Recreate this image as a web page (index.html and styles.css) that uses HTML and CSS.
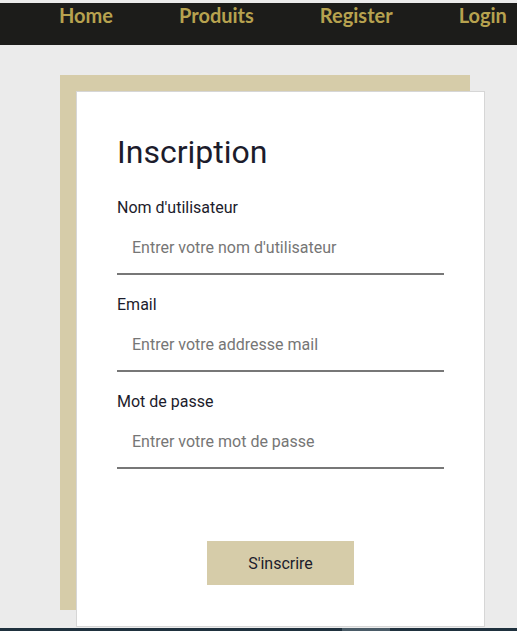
FILE: index.html
```html
<!DOCTYPE html>
<html lang="fr">
<head>
<meta charset="utf-8">
<title>Inscription</title>
<link rel="stylesheet" href="styles.css">
</head>
<body>
<header class="topbar">
  <nav class="nav">
    <a class="nav-link" href="#">Home</a>
    <a class="nav-link" href="#">Produits</a>
    <a class="nav-link" href="#">Register</a>
    <a class="nav-link" href="#">Login</a>
  </nav>
</header>
<main class="main">
  <section class="card">
    <h1 class="title">Inscription</h1>
    <form class="form">
      <div class="field">
        <label class="label" for="u">Nom d'utilisateur</label>
        <input class="input" id="u" type="text" placeholder="Entrer votre nom d'utilisateur">
      </div>
      <div class="field">
        <label class="label" for="e">Email</label>
        <input class="input" id="e" type="email" placeholder="Entrer votre addresse mail">
      </div>
      <div class="field">
        <label class="label" for="p">Mot de passe</label>
        <input class="input" id="p" type="password" placeholder="Entrer votre mot de passe">
      </div>
      <div class="actions">
        <button class="btn" type="button">S'inscrire</button>
      </div>
    </form>
  </section>
</main>
<footer class="footer"><span class="footer-mark"></span></footer>
</body>
</html>
```

FILE: styles.css
```css
* { box-sizing: border-box; }
html, body { margin: 0; padding: 0; }
body {
  background: #ebebeb;
  font-family: Roboto, "Liberation Sans", sans-serif;
  overflow: hidden;
  height: 631px;
}
.topbar {
  margin-top: 3px;
  height: 42px;
  background: #1c1c1a;
}
.nav {
  display: flex;
  gap: 66px;
  padding-left: 59px;
  white-space: nowrap;
}
.nav-link {
  font-family: Lato, "Open Sans", sans-serif;
  font-size: 20px;
  font-weight: 700;
  line-height: 24px;
  color: #b7a24f;
  text-decoration: none;
}
.main {
  padding: 46px 0 0 76px;
}
.card {
  position: relative;
  width: 409px;
  height: 536px;
  background: #fff;
  border: 1px solid #d6d6d6;
  padding: 40px 40px 0 40px;
}
.card::before {
  content: "";
  position: absolute;
  left: -17px;
  top: -17px;
  width: 410px;
  height: 535px;
  background: #d6cca9;
  z-index: -1;
}
.title {
  margin: 0 0 26px;
  font-size: 32px;
  line-height: 40px;
  font-weight: 400;
  color: #1c1c2c;
}
.form {
  display: flex;
  flex-direction: column;
}
.field {
  display: flex;
  flex-direction: column;
  margin-bottom: 20px;
}
.label {
  font-size: 16px;
  line-height: 19px;
  color: #1c1c2c;
}
.input {
  margin-top: 8px;
  height: 50px;
  width: 327px;
  border: none;
  border-bottom: 2px solid #777;
  background: transparent;
  padding: 0 0 4px 15px;
  font-family: Roboto, "Liberation Sans", sans-serif;
  font-size: 16px;
  color: #333;
  outline: none;
}
.input::placeholder { color: #767676; }
.actions {
  display: flex;
  justify-content: center;
  margin-top: 52px;
}
.btn {
  width: 147px;
  height: 44px;
  border: none;
  background: #d6cca9;
  font-family: Roboto, "Liberation Sans", sans-serif;
  font-size: 16px;
  color: #1c1c2c;
  cursor: pointer;
}
.footer {
  margin-top: 1px;
  height: 3px;
  background: #1f313e;
  padding-left: 342px;
}
.footer-mark {
  display: block;
  width: 48px;
  height: 100%;
  background: #4a5b67;
}
```
